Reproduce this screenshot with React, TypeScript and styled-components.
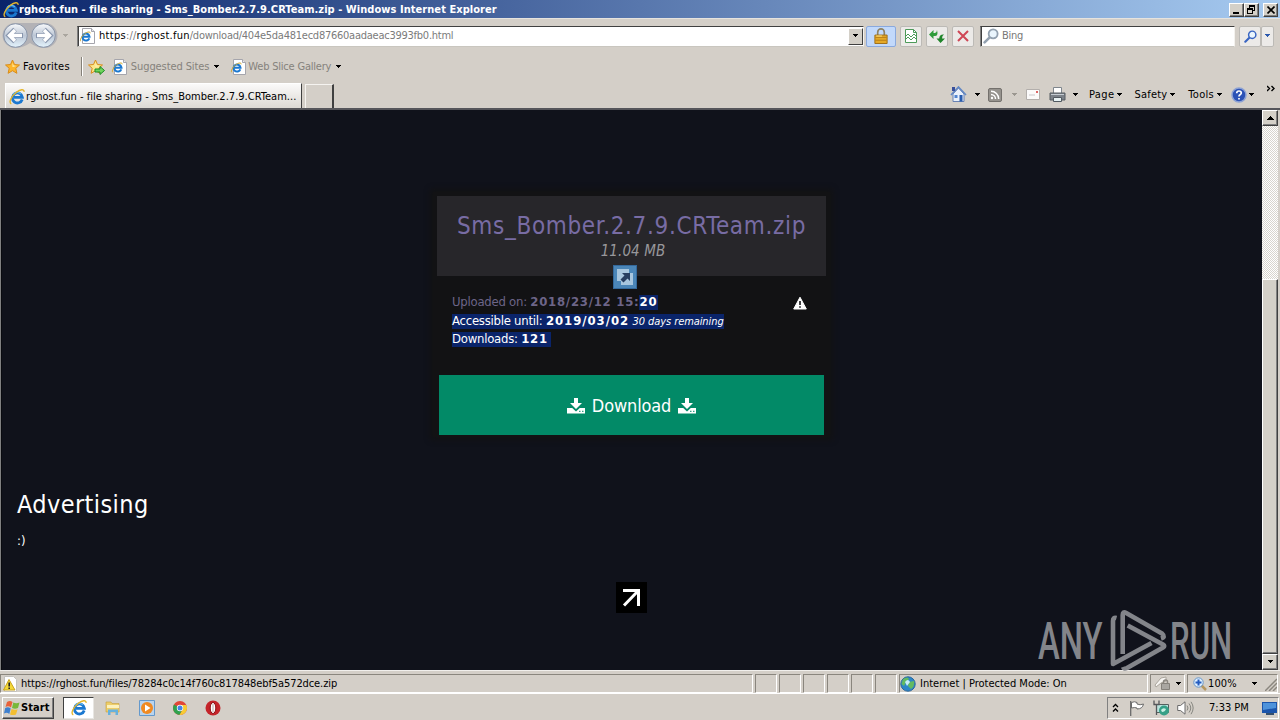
import React from 'react';
import styled, { createGlobalStyle } from 'styled-components';

const GlobalStyle = createGlobalStyle`
  * {
    box-sizing: border-box;
  }

  body {
    margin: 0;
    overflow: hidden;
    background: #d4d0c8;
    font-family: 'DejaVu Sans Condensed', 'DejaVu Sans', sans-serif;
    font-size: 11px;
    color: #000;
  }

  svg {
    display: block;
    flex-shrink: 0;
  }
`;

const Window = styled.div`
  width: 1280px;
  height: 720px;
  display: flex;
  flex-direction: column;
  background: #d4cfc8;
  overflow: hidden;
`;

const Label = styled.span<{ $spacing?: number; $color?: string; $bold?: boolean }>`
  letter-spacing: ${props => props.$spacing ?? 0}px;
  color: ${props => props.$color ?? 'inherit'};
  font-weight: ${props => (props.$bold ? 700 : 400)};
  white-space: pre;
  line-height: 14px;
`;

const Gap = styled.div<{ $w?: number }>`
  width: ${props => props.$w ?? 0}px;
  flex: ${props => (props.$w === undefined ? '1' : '0 0 auto')};
`;

/* ---------- title bar ---------- */

const TitleBar = styled.div`
  height: 18px;
  flex-shrink: 0;
  display: flex;
  align-items: center;
  padding: 1px 2px 0 3px;
  color: #fff;
  background: linear-gradient(90deg, #0a246a, #a6caf0);
`;

const WindowButton = styled.div<{ $gap?: number }>`
  width: 15px;
  height: 14px;
  margin-left: ${props => props.$gap ?? 0}px;
  display: flex;
  align-items: center;
  justify-content: center;
  background: #d4d0c8;
  border: 1px solid;
  border-color: #fff #404040 #404040 #fff;
  box-shadow: inset -1px -1px #808080;
`;

/* ---------- address row ---------- */

const AddressRow = styled.div`
  height: 35px;
  flex-shrink: 0;
  display: flex;
  align-items: center;
  padding-left: 2px;
  border-top: 1px solid #e6e3de;
`;

const InputBox = styled.div<{ $w: number }>`
  width: ${props => props.$w}px;
  height: 21px;
  display: flex;
  align-items: center;
  background: #fff;
  border: 1px solid;
  border-color: #404040 #f4f2ee #c9c6bf #808080;
  box-shadow: inset 1px 0 #404040;
  padding-left: 1px;
`;

const ComboArrow = styled.div`
  width: 15px;
  height: 17px;
  display: flex;
  align-items: center;
  justify-content: center;
  background: #d4d0c8;
  border: 1px solid;
  border-color: #fff #404040 #404040 #fff;
`;

const ToolButton = styled.div<{ $w: number; $blue?: boolean }>`
  width: ${props => props.$w}px;
  height: 21px;
  display: flex;
  align-items: center;
  justify-content: center;
  background: ${props => (props.$blue ? '#c2d9fb' : '#eceae8')};
  border: 1px solid ${props => (props.$blue ? '#8aa9dd' : '#bcbab6')};
  border-radius: 2px;
`;

/* ---------- favorites and tabs ---------- */

const FavoritesRow = styled.div`
  height: 29px;
  flex-shrink: 0;
  display: flex;
  align-items: center;
  padding: 0 0 2px 5px;
`;

const Divider = styled.div`
  width: 2px;
  height: 19px;
  border-left: 1px solid #848078;
  border-right: 1px solid #fff;
`;

const TabRow = styled.div`
  height: 28px;
  flex-shrink: 0;
  display: flex;
  align-items: stretch;
  padding: 1px 3px 0 5px;
  border-bottom: 2px solid #55555a;
`;

const ActiveTab = styled.div`
  width: 297px;
  display: flex;
  align-items: center;
  padding: 1px 0 0 3px;
  background: linear-gradient(#fbfaf9, #dcd9d4);
  border: 1px solid #fff;
  border-right: 1px solid #404040;
  border-bottom: 0;
`;

const NewTab = styled.div`
  width: 29px;
  margin: 1px 0 0 3px;
  border: 1px solid #f5f3f0;
  border-right: 2px solid #404040;
  border-bottom: 0;
`;

const CommandBar = styled.div`
  display: flex;
  align-items: center;
  padding-bottom: 2px;
  flex: 0 0 auto;
`;

/* ---------- page ---------- */

const Viewport = styled.div`
  height: 560px;
  flex-shrink: 0;
  display: flex;
  border-left: 1px solid #808080;
`;

const Page = styled.div`
  position: relative;
  width: 1261px;
  padding-right: 2px;
  background: #10121b;
  border-left: 1px solid #090a0f;
  display: flex;
  flex-direction: column;
  align-items: center;
  color: #fff;
`;

const Card = styled.div`
  width: 397px;
  height: 245px;
  margin-top: 82px;
  padding: 4px;
  background: #121214;
  box-shadow: 0 0 5px 3px #121214;
`;

const FileHeader = styled.div`
  height: 80px;
  padding: 14px 0 0 1px;
  display: flex;
  flex-direction: column;
  align-items: center;
  background: #27262a;
`;

const FileName = styled.h1`
  margin: 0;
  font-size: 24px;
  font-weight: 400;
  line-height: 33px;
  letter-spacing: 0.67px;
  color: #786ca4;
  white-space: nowrap;
`;

const FileSize = styled.div`
  font-size: 15px;
  font-style: italic;
  line-height: 17px;
  letter-spacing: 0.1px;
  padding-left: 3px;
  color: #98979b;
`;

const FileMeta = styled.div`
  height: 99px;
  padding: 17px 19px 0 15.5px;
  display: flex;
  justify-content: space-between;
`;

const MetaList = styled.div`
  font-size: 13px;
`;

const MetaLine = styled.div<{ $dim?: boolean }>`
  height: ${props => (props.$dim ? 19 : 18)}px;
  line-height: 18px;
  white-space: pre;
  letter-spacing: -0.25px;
  color: ${props => (props.$dim ? '#6d6588' : '#fff')};
`;

const Strong = styled.b<{ $spacing?: number }>`
  letter-spacing: ${props => props.$spacing ?? 0.75}px;
`;

const Small = styled.i`
  font-size: 11px;
  letter-spacing: -0.08px;
`;

const Selected = styled.span`
  display: inline-block;
  height: 15px;
  line-height: 14px;
  background: #0a246a;
  color: #fff;
`;

const ReportIcon = styled.div`
  padding-top: 3px;
`;

const DownloadButton = styled.div`
  height: 60px;
  margin: 0 2px;
  padding: 1px 0 0 1px;
  display: flex;
  align-items: center;
  justify-content: center;
  gap: 7px;
  background: #028a67;
  font-size: 18px;
  letter-spacing: -0.15px;
`;

const Advertising = styled.div`
  align-self: stretch;
  padding: 50px 0 0 15px;
`;

const AdTitle = styled.h2`
  margin: 0;
  font-size: 25px;
  font-weight: 400;
  line-height: 36px;
  letter-spacing: 0.4px;
`;

const AdText = styled.div`
  margin-top: 9px;
  font-size: 13px;
  line-height: 18px;
`;

const ArrowBox = styled.div`
  width: 31px;
  height: 31px;
  margin-top: 32px;
  display: flex;
  align-items: center;
  justify-content: center;
  background: #000;
`;

const Accelerator = styled.div`
  position: absolute;
  left: 611px;
  top: 155px;
`;

const Watermark = styled.div`
  position: absolute;
  left: 1036px;
  top: 499px;
  width: 200px;
  height: 64px;
  display: flex;
  align-items: center;
  color: #83858a;
`;

const WatermarkText = styled.div<{ $w: number; $scale: number }>`
  width: ${props => props.$w}px;
  padding-top: 2px;
  font: 500 52px/60px Roboto, sans-serif;
  transform: scaleX(${props => props.$scale});
  transform-origin: left;
  white-space: nowrap;
`;

const ScrollBar = styled.div`
  width: 16px;
  display: flex;
  flex-direction: column;
  background: repeating-conic-gradient(#fff 0 25%, #d8d5ce 0 50%) 0 0 / 2px 2px;
`;

const ScrollButton = styled.div`
  height: 16px;
  display: flex;
  align-items: center;
  justify-content: center;
  background: #d4d0c8;
  border: 1px solid;
  border-color: #fff #404040 #404040 #fff;
  box-shadow: inset -1px -1px #808080;
`;

const Thumb = styled.div`
  margin-top: 153px;
  flex: 1;
  background: #d4d0c8;
  border: 1px solid;
  border-color: #fff #404040 #404040 #fff;
  box-shadow: inset -1px -1px #808080;
`;

/* ---------- status bar and taskbar ---------- */

const StatusBar = styled.div`
  height: 24px;
  flex-shrink: 0;
  display: flex;
  align-items: center;
  gap: 2px;
  padding-top: 2px;
  border-top: 1px solid #f1efec;
  border-bottom: 1px solid #fff;
`;

const Pane = styled.div<{ $w: number }>`
  width: ${props => props.$w}px;
  height: 19px;
  padding-top: 1px;
  display: flex;
  align-items: center;
  border: 1px solid;
  border-color: #8a867e #fff #fff #8a867e;
`;

const Taskbar = styled.div`
  height: 26px;
  display: flex;
  align-items: center;
  padding: 1px 1px 0 2px;
`;

const StartButton = styled.div`
  width: 52px;
  height: 22px;
  display: flex;
  align-items: center;
  padding-left: 1px;
  border: 1px solid;
  border-color: #fff #404040 #404040 #fff;
  box-shadow: inset -1px -1px #808080;
`;

const PressedButton = styled.div`
  width: 31px;
  height: 22px;
  margin-left: 9px;
  display: flex;
  align-items: center;
  justify-content: center;
  background: #fff;
  border: 1px solid;
  border-color: #404040 #e8e6e2 #e8e6e2 #404040;
`;

const QuickLaunch = styled.div`
  display: flex;
  align-items: center;
  gap: 18px;
  margin-left: 11px;
`;

const Tray = styled.div`
  width: 172px;
  height: 22px;
  display: flex;
  align-items: center;
  padding-left: 4px;
  border: 1px solid;
  border-color: #808080 #fff #fff #808080;
`;

/* ---------- icons ---------- */

const Caret = ({ color = '#000', up = false }: { color?: string; up?: boolean }) => (
  <svg width="7" height="4" viewBox="0 0 7 4" shapeRendering="crispEdges">
    <path d={up ? 'M0 4h7L3.5 0z' : 'M1 0h5v1H5v1H4v1H3V2H2V1H1z'} fill={color} />
  </svg>
);

const IeLogo = ({ size = 16 }: { size?: number }) => (
  <svg width={size} height={size} viewBox="0 0 16 16">
    <path d="M13.2 10.5A5 5 0 1 1 13.4 8.4H5" fill="none" stroke="#1b78d0" strokeWidth="2.8" />
    <path d="M4.4 5.2A5 5 0 0 1 11.8 4.7" fill="none" stroke="#62b9f2" strokeWidth="1.2" />
    <path d="M2.3 14.8C-.8 13.6 2.4 7 7.4 3.2c3.8-2.8 8-3.5 7.6-.3" fill="none" stroke="#e3b52c" strokeWidth="1.4" />
  </svg>
);

const PageIe = () => (
  <svg width="16" height="16" viewBox="0 0 16 16">
    <path d="M3.5 .5h9l3 3v12h-12z" fill="#fff" stroke="#a5a5ac" />
    <path d="M12.5 .5v3h3" fill="#e7e7ec" stroke="#a5a5ac" />
    <path d="M10.3 10.3A3.5 3.5 0 1 1 10.5 8.7H4" fill="none" stroke="#1b78d0" strokeWidth="2" />
    <path d="M2 13.3C.3 12.6 2.5 8 6 5.5c2.5-1.8 5.5-2.2 5.2-.2" fill="none" stroke="#d3a92f" strokeWidth="1" />
  </svg>
);

const Star = ({ add = false }: { add?: boolean }) => (
  <svg width="17" height="16" viewBox="0 0 17 16">
    <path
      d="M7.5 1l2 4.5 5 .5-3.7 3.3 1.1 5-4.4-2.6-4.4 2.6 1.1-5L.5 6l5-.5z"
      fill={add ? '#fbe68a' : '#fdb52c'}
      stroke="#d98d1b"
    />
    <path d="M7.5 3.5l1 3 3 .5-4 1z" fill="#fff0b0" />
    {add && <path d="M7 10h5V7.5l4.5 4-4.5 4V13H7z" fill="#6fd45c" stroke="#1d8c26" />}
  </svg>
);

const NavArrows = () => (
  <svg width="56" height="28" viewBox="0 0 56 28">
    <defs>
      <linearGradient id="nav" x1="0" y1="0" x2="0" y2="1">
        <stop offset="0" stopColor="#f8fafc" />
        <stop offset="0.5" stopColor="#bcc6d5" />
        <stop offset="1" stopColor="#e4f4fd" />
      </linearGradient>
    </defs>
    <path d="M13 1h30a12.5 12.5 0 0 1 0 25q-8 0-15-5-7 5-15 5a12.5 12.5 0 0 1 0-25z" fill="#b3b2b6" />
    <circle cx="13.5" cy="13.5" r="11.8" fill="url(#nav)" stroke="#8995a9" />
    <circle cx="41.5" cy="13.5" r="11.8" fill="url(#nav)" stroke="#8995a9" />
    <path d="M21 13.5H8M13 7.5l-6 6 6 6" fill="none" stroke="#8795ad" strokeWidth="5" />
    <path d="M20 13.5H8M13 8l-5.5 5.5L13 19" fill="none" stroke="#fff" strokeWidth="3.4" />
    <path d="M34 13.5h13M42 7.5l6 6-6 6" fill="none" stroke="#8795ad" strokeWidth="5" />
    <path d="M35 13.5h12M42 8l5.5 5.5L42 19" fill="none" stroke="#fff" strokeWidth="3.4" />
  </svg>
);

const Lock = () => (
  <svg width="14" height="16" viewBox="0 0 14 17">
    <path d="M3.5 8V4.5a3.5 3.5 0 0 1 7 0V8" fill="none" stroke="#8f8365" strokeWidth="1.8" />
    <path d="M.5 7.5h13v9H.5z" fill="#e5a928" stroke="#9e6c13" />
    <path d="M1 10h12M1 13h12" stroke="#b87d15" />
    <path d="M2 8.5h6" stroke="#ffe88b" />
  </svg>
);

const BrokenPage = () => (
  <svg width="14" height="16" viewBox="0 0 14 16">
    <path d="M1.5 1.5h8l3 3v10h-11z" fill="#fff" stroke="#4d9a59" />
    <path d="M9.5 1.5v3h3M1 9l3-3 3 3 3-3 3 3M1 12l3-3 3 3 3-3 3 3" fill="none" stroke="#4d9a59" />
  </svg>
);

const Refresh = () => (
  <svg width="16" height="15" viewBox="0 0 16 15">
    <path d="M0 5.500L4.500 1v3H6q2-.5 2-3 1.500 6-2 6H4.500v3z" fill="#2f9c3a" />
    <path d="M16 9.500L11.500 14l-4-4.500h2.700Q10.500 5 15 5.500q-2 1-2 4z" fill="#20852b" />
  </svg>
);

const Stop = () => (
  <svg width="12" height="12" viewBox="0 0 12 12">
    <path d="M1 1l10 10M11 1L1 11" stroke="#cf4655" strokeWidth="2" />
  </svg>
);

const Magnifier = ({ color, size = 15 }: { color: string; size?: number }) => (
  <svg width={size} height={size} viewBox="0 0 15 15">
    <path d="M7 8L1.5 13.5" stroke={color} strokeWidth="2.4" strokeLinecap="round" />
    <circle cx="9.5" cy="5.5" r="4.2" fill="#eaf5fd" stroke={color} strokeWidth="1.7" />
  </svg>
);

const Home = () => (
  <svg width="17" height="17" viewBox="0 0 17 17">
    <path d="M3 8l5.5-6L14 8v7.5H3z" fill="#e9f0fb" stroke="#6882b4" />
    <path d="M1 9l7.5-8L16 9" fill="none" stroke="#6288c4" strokeWidth="1.6" />
    <path d="M2 1h3v4H2z" fill="#384f9a" />
    <path d="M9.5 9h3v6.5h-3z" fill="#285cae" />
    <path d="M4.5 9h3v3h-3z" fill="#5185d0" />
  </svg>
);

const Feed = () => (
  <svg width="14" height="14" viewBox="0 0 14 14">
    <rect x="0.5" y="0.5" width="13" height="13" rx="1.5" fill="#96938e" stroke="#74716d" />
    <path d="M3 6.5a4.5 4.5 0 0 1 4.5 4.5M3 3.3a7.7 7.7 0 0 1 7.7 7.7" fill="none" stroke="#fff" strokeWidth="1.5" />
    <circle cx="4" cy="10" r="1.2" fill="#fff" />
  </svg>
);

const Mail = () => (
  <svg width="14" height="11" viewBox="0 0 14 11">
    <path d="M.5 .5h13v10H.5z" fill="#fbfafa" stroke="#b3afac" />
    <path d="M10 2h2v2h-2z" fill="#dd6565" />
    <path d="M3 6h6" stroke="#c9c6ca" />
  </svg>
);

const Printer = () => (
  <svg width="17" height="16" viewBox="0 0 17 16">
    <path d="M4.5 .5h8v6h-8z" fill="#fff" stroke="#7f868d" />
    <path d="M1 6h15v7H1z" fill="#7c8289" stroke="#565c63" />
    <path d="M2 7.5h13" stroke="#c6cdd3" />
    <path d="M4.5 10.5h8v4h-8z" fill="#e8f2f3" stroke="#515960" />
  </svg>
);

const Help = () => (
  <svg width="16" height="16" viewBox="0 0 16 16">
    <circle cx="8" cy="8" r="7" fill="#2b52b6" stroke="#8da2d4" strokeWidth="1.5" />
    <path d="M5.7 6.2Q5.8 4 8 4t2.3 2Q10.3 7 9 7.8 8 8.4 8 9.5M8 11v1.6" fill="none" stroke="#fff" strokeWidth="1.7" />
  </svg>
);

const WarningSign = () => (
  <svg width="14" height="14" viewBox="0 0 14 14">
    <path d="M7 1.2L13.3 13H.7z" fill="#fff" stroke="#fff" strokeLinejoin="round" />
    <path d="M7 5v4M7 10.2v1.6" stroke="#121214" strokeWidth="1.6" />
  </svg>
);

const PageWarning = () => (
  <svg width="16" height="16" viewBox="0 0 16 16">
    <path d="M3.5 .5h9l3 3v12h-12z" fill="#fff" stroke="#c3c1bd" />
    <path d="M8 3.5L14 14H2.5z" fill="#f4d938" stroke="#c9a21c" strokeLinejoin="round" />
    <path d="M8.2 6.5v4M8.2 11.5V13" stroke="#222" strokeWidth="1.6" />
  </svg>
);

const DownloadIcon = () => (
  <svg width="18" height="16" viewBox="0 0 18 16">
    <path d="M7 0h4v5h4L9 11 3 5h4z" fill="#fff" />
    <path d="M0 10h5.2L9 13.5l3.8-3.5H18v5.5H0z" fill="#fff" />
    <path d="M12 13.3h1.5M15 13.3h1.5" stroke="#028a67" />
  </svg>
);

const PlayMark = () => (
  <svg width="61" height="64" viewBox="0 0 61 64" fill="none" stroke="#83858a" strokeWidth="4.6" strokeLinejoin="round">
    <path d="M7.5 9Q4 8 4 12v43L42.5 34" />
    <path d="M13.7 45V6q0-4 3.5-2L53 24.5q4 3.5-1 5" />
    <path d="M18.7 16.5L54 35.5q2.5 1.5 0 3L18 59q-3 1.500-4-1" />
  </svg>
);

const Globe = () => (
  <svg width="16" height="16" viewBox="0 0 16 16">
    <circle cx="8" cy="8" r="7.2" fill="#2c86c8" stroke="#2a669b" />
    <path d="M3 3q5-3 6 0L6 6 4 10 1.5 8zM9 6l5-1q1 5-3 8l-3-3z" fill="#62ba62" />
    <path d="M5 6q3-4 5 0l-3 4z" fill="#c5edfa" />
  </svg>
);

const WindowsFlag = () => (
  <svg width="17" height="16" viewBox="0 0 17 16">
    <path d="M3 2q3-2 5.5 0L7 7.500q-2.500-2-5.500-.5z" fill="#e8623a" />
    <path d="M9.300 2.500q3 1.500 6.200 0L14 8q-3 1.500-6 0z" fill="#78b83a" />
    <path d="M1.200 8q3-1.500 5.500 .5L5.300 14Q3 12 0 13.500z" fill="#3e80cf" />
    <path d="M7.600 9q3 1.500 6 .3L12 14.500q-3 1-6 0z" fill="#f3bf32" />
  </svg>
);

const Explorer = () => (
  <svg width="16" height="16" viewBox="0 0 16 16">
    <path d="M1 2h5l1 1.5h7V12H1z" fill="#edcd69" stroke="#c49d3d" strokeWidth="0.6" />
    <path d="M2 5h12v3H2z" fill="#fcf1bd" />
    <path d="M3 15V9.5h10V15h-2.5v-3h-5v3z" fill="#66b1dd" />
  </svg>
);

const MediaPlayer = () => (
  <svg width="16" height="16" viewBox="0 0 16 16">
    <path d="M.5 .5h15v15H.5z" fill="#b9d4ee" stroke="#6499cc" />
    <circle cx="8" cy="8" r="6" fill="#f08a22" />
    <path d="M6 4.5L11.5 8 6 11.5z" fill="#fff" />
  </svg>
);

const Chrome = () => (
  <svg width="14" height="14" viewBox="0 0 14 14">
    <circle cx="7" cy="7" r="7" fill="#e14637" />
    <path d="M1 3.5A7 7 0 0 0 6.5 14L9.5 8.5 7 7z" fill="#30a24e" />
    <path d="M6.5 14A7 7 0 0 0 13.3 4H7l2.7 4.5z" fill="#f7cc34" />
    <circle cx="7" cy="7" r="3.2" fill="#fff" />
    <circle cx="7" cy="7" r="2.5" fill="#4384e6" />
  </svg>
);

const Opera = () => (
  <svg width="16" height="16" viewBox="0 0 16 16">
    <circle cx="8" cy="8" r="7.5" fill="#c4242a" />
    <ellipse cx="8" cy="8" rx="2.8" ry="5.5" fill="#fff" stroke="#8d0e13" />
    <path d="M8 4v8" stroke="#b9a5a7" />
  </svg>
);

const NetworkIcon = () => (
  <svg width="17" height="16" viewBox="0 0 17 16">
    <path d="M3.5 4.5h12v8h-12z" fill="#b9e2dd" stroke="#56605e" />
    <circle cx="11" cy="10.5" r="5" fill="#36a087" />
    <path d="M8 10q2-3 5-1-1 3-4 3z" fill="#c8f0e4" />
    <path d="M1 .5v4h5v-4M3.5 4v11" fill="none" stroke="#55575a" strokeWidth="1.3" />
  </svg>
);

const Speaker = () => (
  <svg width="17" height="14" viewBox="0 0 17 14">
    <path d="M.7 4.5h2.8L8 .8v12.4L3.5 9.5H.7z" fill="#fff" stroke="#6b6b6b" />
    <path d="M10 4.5q2 2.500 0 5M12 2.500q3.500 4.500 0 9M14 .8q4.300 6.200 0 12.400" fill="none" stroke="#85857f" />
  </svg>
);

const Flag = () => (
  <svg width="16" height="16" viewBox="0 0 16 16">
    <path d="M2.5 2.5q3-1.500 5.500 0v1.500q3 1.500 6.500 0-1 5-6.500 5v-1q-2-1-5.500 0z" fill="#fff" stroke="#6b6b6b" />
    <path d="M1.7 1v15" stroke="#6b6b6b" strokeWidth="1.3" />
  </svg>
);

const ProtectedLock = () => (
  <svg width="18" height="15" viewBox="0 0 18 15">
    <path d="M1 9l6-7 5-1v4L7 7l-5 4z" fill="#f6f4f1" stroke="#aaa59c" />
    <path d="M9.5 8V6a2 2 0 0 1 4 0v2" fill="none" stroke="#8a8680" strokeWidth="1.5" />
    <path d="M7.5 7.5h8v6h-8z" fill="#a9a6a1" stroke="#85817b" />
  </svg>
);

const favoriteLinks = [
  { title: 'Suggested Sites', spacing: -0.1, iconGap: 4, after: 10 },
  { title: 'Web Slice Gallery', spacing: -0.2, iconGap: 2, after: 0 },
];

const menus = [
  { title: 'Page', spacing: 0.4, before: 10 },
  { title: 'Safety', spacing: 0.2, before: 11 },
  { title: 'Tools', spacing: 0.3, before: 12 },
];

const BrowserChrome = () => (
  <>
    <TitleBar>
      <IeLogo />
      <Label $bold $spacing={0.05}>rghost.fun - file sharing - Sms_Bomber.2.7.9.CRTeam.zip - Windows Internet Explorer</Label>
      <Gap />
      <WindowButton>
        <svg width="9" height="8" shapeRendering="crispEdges"><path d="M1 6h6v2H1z" /></svg>
      </WindowButton>
      <WindowButton>
        <svg width="9" height="9" fill="none" stroke="#000" shapeRendering="crispEdges">
          <path d="M2.5 3V.5h5v5H6M2 1.5h6M.5 3.5h5v5h-5zM0 4.5h6" />
        </svg>
      </WindowButton>
      <WindowButton $gap={4}>
        <svg width="8" height="8"><path d="M.5 .5l7 7M7.5 .5l-7 7" stroke="#000" strokeWidth="1.6" /></svg>
      </WindowButton>
    </TitleBar>
    <AddressRow>
      <NavArrows />
      <Gap $w={4} />
      <Caret color="#aaa69f" />
      <Gap $w={8} />
      <InputBox $w={787}>
        <PageIe />
        <Gap $w={4} />
        <Label $spacing={-0.25} $color="#7b7b7b">
          <Label $spacing={0.3} $color="#000">https</Label>
          <Label $spacing={0.2} $color="#7b7b7b">://</Label>
          <Label $spacing={0.25} $color="#000">rghost.fun</Label>
          /download/404e5da481ecd87660aadaeac3993fb0.html
        </Label>
        <Gap />
        <ComboArrow><Caret /></ComboArrow>
      </InputBox>
      <Gap $w={2} />
      <ToolButton $w={30} $blue><Lock /></ToolButton>
      <Gap $w={4} />
      <ToolButton $w={22}><BrokenPage /></ToolButton>
      <Gap $w={4} />
      <ToolButton $w={22}><Refresh /></ToolButton>
      <Gap $w={4} />
      <ToolButton $w={22}><Stop /></ToolButton>
      <Gap $w={6} />
      <InputBox $w={255}>
        <Gap $w={1} />
        <Magnifier color="#93a1b0" size={16} />
        <Gap $w={3} />
        <Label $spacing={-0.3} $color="#777">Bing</Label>
      </InputBox>
      <Gap $w={4} />
      <ToolButton $w={22}><Magnifier color="#3965c2" size={13} /></ToolButton>
      <ToolButton $w={13}><Caret color="#2b58ad" /></ToolButton>
    </AddressRow>
    <FavoritesRow>
      <Star />
      <Gap $w={1} />
      <Label $spacing={0.25}>Favorites</Label>
      <Gap $w={11} />
      <Divider />
      <Gap $w={5} />
      <Star add />
      <Gap $w={6} />
      {favoriteLinks.map(link => (
        <React.Fragment key={link.title}>
          <PageIe />
          <Gap $w={link.iconGap} />
          <Label $spacing={link.spacing} $color="#85827c">{link.title}</Label>
          <Gap $w={4} />
          <Caret />
          <Gap $w={link.after} />
        </React.Fragment>
      ))}
    </FavoritesRow>
    <TabRow>
      <ActiveTab>
        <IeLogo />
        <Gap $w={1} />
        <Label $spacing={0.02}>rghost.fun - file sharing - Sms_Bomber.2.7.9.CRTeam...</Label>
      </ActiveTab>
      <NewTab />
      <Gap />
      <CommandBar>
        <Home />
        <Gap $w={7} />
        <Caret />
        <Gap $w={7} />
        <Feed />
        <Gap $w={9} />
        <Caret color="#9b9790" />
        <Gap $w={8} />
        <Mail />
        <Gap $w={9} />
        <Printer />
        <Gap $w={6} />
        <Caret />
        {menus.map(menu => (
          <React.Fragment key={menu.title}>
            <Gap $w={menu.before} />
            <Label $spacing={menu.spacing}>{menu.title}</Label>
            <Gap $w={2} />
            <Caret />
          </React.Fragment>
        ))}
        <Gap $w={8} />
        <Help />
        <Gap $w={1} />
        <Caret />
        <Gap $w={12} />
        <svg width="10" height="22"><path d="M0 2l2.500 2.500L0 7M4.500 2L7 4.500 4.500 7" fill="none" stroke="#000" strokeWidth="1.4" /></svg>
      </CommandBar>
    </TabRow>
  </>
);

const SharePage = () => (
  <Page>
    <Card>
      <FileHeader>
        <FileName>Sms_Bomber.2.7.9.CRTeam.zip</FileName>
        <FileSize>11.04 MB</FileSize>
      </FileHeader>
      <FileMeta>
        <MetaList>
          <MetaLine $dim>Uploaded on: <Strong>2018/23/12 15:</Strong><Selected><Strong $spacing={1}>20</Strong></Selected></MetaLine>
          <MetaLine><Selected>Accessible until: <Strong $spacing={0.95}>2019/03/02</Strong> <Small>30 days remaining</Small></Selected></MetaLine>
          <MetaLine><Selected>Downloads: <Strong>121</Strong> </Selected></MetaLine>
        </MetaList>
        <ReportIcon>
          <WarningSign />
        </ReportIcon>
      </FileMeta>
      <DownloadButton>
        <DownloadIcon />
        Download
        <DownloadIcon />
      </DownloadButton>
    </Card>
    <Advertising>
      <AdTitle>Advertising</AdTitle>
      <AdText>:)</AdText>
    </Advertising>
    <ArrowBox>
      <svg width="19" height="19" viewBox="0 0 19 19" fill="none" stroke="#fff" strokeWidth="3">
        <path d="M1 2.5h15.5V18M16 3L2 17.5" />
      </svg>
    </ArrowBox>
    <Accelerator>
      <svg width="24" height="24" viewBox="0 0 24 24">
        <path d="M0 0h24v24H0z" fill="#34699c" />
        <path d="M1 1h22v22H1z" fill="#4b86b8" />
        <path d="M4 4h12v4h4v12H8v-4H4z" fill="#a8c6de" />
        <path d="M9 8h8v8l-2.500-2.500-4 4-3-3 4-4z" fill="#263d60" />
      </svg>
    </Accelerator>
    <Watermark>
      <WatermarkText $w={71} $scale={0.63}>ANY</WatermarkText>
      <PlayMark />
      <WatermarkText $w={63} $scale={0.6}>RUN</WatermarkText>
    </Watermark>
  </Page>
);

const BottomBars = () => (
  <>
    <StatusBar>
      <Pane $w={753}>
        <PageWarning />
        <Gap $w={4} />
        <Label $spacing={-0.1}>https://rghost.fun/files/78284c0c14f760c817848ebf5a572dce.zip</Label>
      </Pane>
      {[0, 1, 2, 3, 4, 5].map(i => <Pane key={i} $w={22} />)}
      <Pane $w={249}>
        <Globe />
        <Gap $w={4} />
        <Label>Internet | Protected Mode: On</Label>
      </Pane>
      <Pane $w={35}>
        <Gap $w={3} />
        <ProtectedLock />
        <Gap $w={3} />
        <Caret />
      </Pane>
      <Pane $w={91}>
        <Gap $w={5} />
        <svg width="14" height="14" viewBox="0 0 14 14">
          <path d="M8 8l5 5" stroke="#b69761" strokeWidth="2.5" />
          <circle cx="5.5" cy="5.5" r="4.7" fill="#deefff" stroke="#6595c9" />
          <path d="M5.5 2.5v6M2.5 5.5h6" stroke="#245cc0" strokeWidth="2" />
        </svg>
        <Gap $w={1} />
        <Label $spacing={0.1}>100%</Label>
        <Gap $w={14} />
        <Caret />
        <Gap />
        <svg width="12" height="14"><path d="M0 14L12 2M4 14l8-8M8 14l4-4" stroke="#8b877f" strokeWidth="1.5" /></svg>
      </Pane>
    </StatusBar>
    <Taskbar>
      <StartButton>
        <WindowsFlag />
        <Label $bold $spacing={0.1}>Start</Label>
      </StartButton>
      <PressedButton><IeLogo /></PressedButton>
      <QuickLaunch>
        <Explorer />
        <MediaPlayer />
        <Chrome />
        <Opera />
      </QuickLaunch>
      <Gap />
      <Tray>
        <svg width="7" height="10" fill="none" stroke="#000" strokeWidth="1.3"><path d="M1 4l2.500-2.500L6 4M1 8.500L3.500 6 6 8.500" /></svg>
        <Gap $w={10} />
        <Flag />
        <Gap $w={8} />
        <NetworkIcon />
        <Gap $w={7} />
        <Speaker />
        <Gap $w={15} />
        <Label>7:33 PM</Label>
        <Gap />
        <svg width="16" height="14" viewBox="0 0 16 14">
          <path d="M0 1h15v11H0z" fill="#1c55ab" />
          <path d="M1 2h13v5L1 9z" fill="#4e93db" />
          <path d="M4 13h8" stroke="#36506e" strokeWidth="2" />
        </svg>
      </Tray>
    </Taskbar>
  </>
);

export default function App() {
  return (
    <>
      <GlobalStyle />
      <Window>
        <BrowserChrome />
        <Viewport>
          <SharePage />
          <ScrollBar>
            <ScrollButton><Caret up /></ScrollButton>
            <Thumb />
            <ScrollButton><Caret /></ScrollButton>
          </ScrollBar>
        </Viewport>
        <BottomBars />
      </Window>
    </>
  );
}
